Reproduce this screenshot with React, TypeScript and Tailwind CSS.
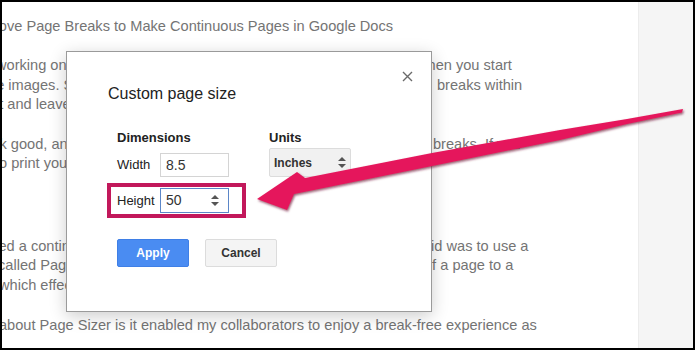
import React from "react";

function Spinner({ color = "#555" }: { color?: string }) {
  return (
    <svg width="8" height="11" viewBox="0 0 8 11" className="shrink-0">
      <polygon points="4,0 8,4 0,4" fill={color} />
      <polygon points="0,7 8,7 4,11" fill={color} />
    </svg>
  );
}

type LineProps = { left: string; shift: number; right?: string; rightAt?: number };

const CLIP = 428;

function Line({ left, shift, right, rightAt = CLIP }: LineProps) {
  const clip = right ? CLIP : 638;
  return (
    <div className="flex h-[19.5px] leading-[19.5px] whitespace-nowrap">
      <div className="shrink-0 overflow-hidden" style={{ width: clip }}>
        <span className="inline-block" style={{ marginLeft: shift }}>
          {left}
        </span>
      </div>
      {right ? <span style={{ marginLeft: rightAt - CLIP }}>{right}</span> : null}
    </div>
  );
}

export default function App() {
  return (
    <div className="relative w-[695px] h-[350px] overflow-hidden bg-white font-['Liberation_Sans',Arial,sans-serif]">
      <div className="flex h-full">
        {/* document column */}
        <div className="w-[638px] shrink-0 overflow-hidden text-[14.6px] text-[#747474]">
          <div className="mt-[16px] h-[20px] leading-[20px] whitespace-nowrap">
            <span className="inline-block ml-[-32px]">
              Remove Page Breaks to Make Continuous Pages in Google Docs
            </span>
          </div>

          <div className="mt-[20px]">
            <Line
              left="working on a long document with a lot of text and tables, then"
              shift={-4}
              right="when you start"
              rightAt={417}
            />
            <Line
              left="the images. Soon you may notice that Google Docs inserts page"
              shift={-16}
              right="breaks within"
              rightAt={437}
            />
            <Line left="out and leaves lots of whitespace behind." shift={-17} />
          </div>

          <div className="mt-[20px]">
            <Line
              left="look good, and you may also want to get rid of those page"
              shift={-20}
              right="breaks. If you"
              rightAt={433}
            />
            <Line left="to print your document later on." shift={-5} />
          </div>

          <div className="mt-[63px]">
            <Line
              left="needed a continuous page, and the best thing that I"
              shift={-34}
              right="did was to use a"
              rightAt={423}
            />
            <Line
              left="called Page Sizer, which lets you change the height"
              shift={-2}
              right="of a page to a"
              rightAt={424}
            />
            <Line left="which effectively removes page breaks." shift={-1} />
          </div>

          <div className="mt-[21px]">
            <Line
              left="about Page Sizer is it enabled my collaborators to enjoy a break-free experience as"
              shift={-1}
            />
          </div>
        </div>

        {/* gray side strip */}
        <div className="flex-1 bg-[#f5f5f5] border-l border-[#ececec]" />
      </div>

      {/* dialog */}
      <div className="absolute left-[66px] top-[51px] w-[366px] h-[261px] bg-white border border-[#9a9a9a] shadow-[0_4px_16px_rgba(0,0,0,0.2)] pl-[41px] pt-[32px]">
        <button className="absolute right-[17px] top-[17px] w-[14px] h-[14px] flex items-center justify-center">
          <svg width="11" height="11" viewBox="0 0 11 11">
            <path d="M1 1 L10 10 M10 1 L1 10" stroke="#6a6a6a" strokeWidth="1.4" />
          </svg>
        </button>

        <div className="text-[16px] leading-[20px] text-[#222]">Custom page size</div>

        <div className="ml-[9px] mt-[26px] flex text-[13px] text-[#222]">
          <div className="w-[152px] shrink-0">
            <div className="font-bold leading-[16px]">Dimensions</div>
            <div className="mt-[7px] flex items-center">
              <span className="w-[43px] leading-[16px]">Width</span>
              <div className="w-[69px] h-[24px] border border-[#d4d4d4] flex items-center pl-[5px] text-[14px] text-[#333]">
                8.5
              </div>
            </div>
            <div className="mt-[6px] ml-[-10px] w-[139px] border-[4px] border-[#c2185b] pl-[6px] pt-[1px] pb-[1px] flex items-center">
              <span className="w-[43px] leading-[16px]">Height</span>
              <div className="w-[69px] h-[25px] border border-[#5b86c8] flex items-center justify-between pl-[5px] pr-[9px] text-[14px] text-[#333]">
                <span>50</span>
                <Spinner />
              </div>
            </div>
          </div>
          <div>
            <div className="font-bold leading-[16px]">Units</div>
            <div className="mt-[2px] w-[82px] h-[29px] bg-[#f1f1f1] border border-[#dcdcdc] rounded-[2px] flex items-center justify-between pl-[4px] pr-[4px] text-[12px] font-bold text-[#333]">
              <span>Inches</span>
              <Spinner />
            </div>
          </div>
        </div>

        <div className="ml-[9px] mt-[21px] flex gap-[16px] text-[12px] font-bold">
          <button className="w-[72px] h-[28px] rounded-[2px] bg-[#4a8cf2] border border-[#3f7fe6] text-white">
            Apply
          </button>
          <button className="w-[72px] h-[28px] rounded-[2px] bg-[#f4f4f4] border border-[#dcdcdc] text-[#333]">
            Cancel
          </button>
        </div>
      </div>

      {/* annotation arrow */}
      <svg className="absolute inset-0 pointer-events-none" width="695" height="350" viewBox="0 0 695 350">
        <defs>
          <filter id="sh" x="-10%" y="-50%" width="120%" height="200%">
            <feDropShadow dx="1" dy="1.5" stdDeviation="1.2" floodColor="#6a0f2e" floodOpacity="0.7" />
          </filter>
        </defs>
        <polygon
          filter="url(#sh)"
          fill="#e5195c"
          points="257,199 297,172 305,178 432,153 560,130 627,119 683,109 682,112.5 627,124 560,140 432,166 294,194 287,210"
        />
      </svg>

      {/* photo frame */}
      <div className="absolute inset-0 border-2 border-black pointer-events-none" />
    </div>
  );
}
